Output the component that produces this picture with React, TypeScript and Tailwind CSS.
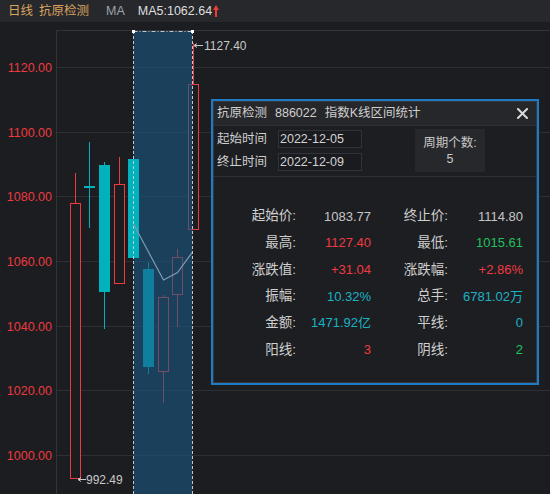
import React from "react";

const RED = "#ec3a3e";
const CYAN = "#00b2bb";
const BG = "#1c1d21";

type C = { cx: number; top: number; bot: number; hi: number; lo: number; kind: "up" | "down" | "doji" };

const before: C[] = [
  { cx: 75.5, top: 203, bot: 479, hi: 173, lo: 479, kind: "up" },
  { cx: 89.5, top: 186, bot: 188, hi: 142, lo: 228, kind: "doji" },
  { cx: 104.5, top: 165, bot: 292, hi: 162, lo: 329, kind: "down" },
  { cx: 119.5, top: 184, bot: 284, hi: 157, lo: 284, kind: "up" },
];
const inside: C[] = [
  { cx: 148.5, top: 269, bot: 367, hi: 262, lo: 374, kind: "down" },
  { cx: 163.5, top: 297, bot: 372, hi: 295, lo: 403, kind: "up" },
  { cx: 177.5, top: 257, bot: 295, hi: 249, lo: 327, kind: "up" },
  { cx: 193.5, top: 84, bot: 230, hi: 43, lo: 230, kind: "up" },
];
const c5: C = { cx: 133.5, top: 159, bot: 258, hi: 159, lo: 258, kind: "down" };

function Candle({ c }: { c: C }) {
  const x0 = c.cx - 5.5;
  if (c.kind === "up") {
    return (
      <g>
        <rect x={c.cx - 0.5} y={c.hi} width={1} height={c.lo - c.hi} fill={RED} />
        <rect x={x0} y={c.top} width={11} height={c.bot - c.top} fill={RED} />
        <rect x={x0 + 1} y={c.top + 1} width={9} height={c.bot - c.top - 2} fill={BG} />
      </g>
    );
  }
  if (c.kind === "doji") {
    return (
      <g fill={CYAN}>
        <rect x={c.cx - 0.5} y={c.hi} width={1} height={c.lo - c.hi} />
        <rect x={x0} y={c.top} width={11} height={2} />
      </g>
    );
  }
  return (
    <g fill={CYAN}>
      <rect x={c.cx - 0.5} y={c.hi} width={1} height={c.lo - c.hi} />
      <rect x={x0} y={c.top} width={11} height={c.bot - c.top} />
    </g>
  );
}

const grid = [
  { y: 67, label: "1120.00" },
  { y: 132, label: "1100.00" },
  { y: 196, label: "1080.00" },
  { y: 261, label: "1060.00" },
  { y: 326, label: "1040.00" },
  { y: 390, label: "1020.00" },
  { y: 455, label: "1000.00" },
];

const FONT = '"Liberation Sans", Arial, sans-serif';

function Chart() {
  return (
    <svg className="block" width={550} height={472} viewBox="0 22 550 472">
      <rect x={0} y={22} width={550} height={472} fill={BG} />
      <rect x={56} y={30} width={494} height={1} fill="#333438" />
      <rect x={56} y={30} width={1} height={464} fill="#333438" />
      {grid.map((g) => (
        <g key={g.y}>
          <rect x={57} y={g.y} width={493} height={1} fill="#2e2f33" />
          <text x={52} y={g.y + 5} textAnchor="end" fontSize={12.5} fill={RED} fontFamily={FONT}>
            {g.label}
          </text>
        </g>
      ))}
      {before.map((c) => (
        <Candle key={c.cx} c={c} />
      ))}
      {inside.map((c) => (
        <Candle key={c.cx} c={c} />
      ))}
      {/* selection overlay */}
      <rect x={133.5} y={31} width={59} height={463} fill="#1a5a88" opacity={0.58} />
      <Candle c={c5} />
      <polyline
        points="133.5,224 148.5,252 163.5,280 177.5,272.5 192.5,252"
        fill="none"
        stroke="#7e9cb2"
        strokeWidth={1.2}
      />
      <line x1={133.5} x2={133.5} y1={31} y2={494} stroke="#c4c8cc" strokeWidth={1} strokeDasharray="3 2" />
      <line x1={192.5} x2={192.5} y1={31} y2={494} stroke="#c4c8cc" strokeWidth={1} strokeDasharray="3 2" />
      <line x1={133.5} x2={192.5} y1={31.5} y2={31.5} stroke="#c4c8cc" strokeWidth={1} strokeDasharray="4 2 1 2" />
      <rect x={132} y={30} width={3} height={3} fill="#ffffff" />
      <rect x={191} y={30} width={3} height={3} fill="#ffffff" />
      {/* high label */}
      <line x1={194} x2={203} y1={45.5} y2={45.5} stroke="#c8c8c8" strokeWidth={1} />
      <path d="M194 45.5 L197 43.5 M194 45.5 L197 47.5" stroke="#c8c8c8" strokeWidth={1} fill="none" />
      <text x={204} y={50} fontSize={12} fill="#c8c8c8" fontFamily={FONT}>
        1127.40
      </text>
      {/* low label */}
      <line x1={78} x2={86} y1={479.5} y2={479.5} stroke="#c8c8c8" strokeWidth={1} />
      <path d="M78 479.5 L81 477.5 M78 479.5 L81 481.5" stroke="#c8c8c8" strokeWidth={1} fill="none" />
      <text x={86} y={484} fontSize={12} fill="#c8c8c8" fontFamily={FONT}>
        992.49
      </text>
    </svg>
  );
}

type Cell = { t: string; c: string };
const rows: [string, Cell, string, Cell][] = [
  ["起始价:", { t: "1083.77", c: "text-[#c6c6c6]" }, "终止价:", { t: "1114.80", c: "text-[#c6c6c6]" }],
  ["最高:", { t: "1127.40", c: "text-[#ee3b40]" }, "最低:", { t: "1015.61", c: "text-[#22c25c]" }],
  ["涨跌值:", { t: "+31.04", c: "text-[#ee3b40]" }, "涨跌幅:", { t: "+2.86%", c: "text-[#ee3b40]" }],
  ["振幅:", { t: "10.32%", c: "text-[#1bb3c4]" }, "总手:", { t: "6781.02万", c: "text-[#1bb3c4]" }],
  ["金额:", { t: "1471.92亿", c: "text-[#1bb3c4]" }, "平线:", { t: "0", c: "text-[#1bb3c4]" }],
  ["阳线:", { t: "3", c: "text-[#ee3b40]" }, "阴线:", { t: "2", c: "text-[#22c25c]" }],
];

function Dialog() {
  return (
    <div className="absolute left-[211px] top-[77px] w-[328px] h-[286px] border-2 border-[#1e7bc6] bg-[#1d1e22]">
      <div className="h-full border border-[#38343a] flex flex-col">
        <div className="h-[24px] bg-[#26272b] border-b border-[#303136] flex items-center pl-[3px] pr-[8px] text-[12.5px] text-[#cfcfcf]">
          <span>抗原检测</span>
          <span className="ml-[8px]">886022</span>
          <span className="ml-[8px]">指数K线区间统计</span>
          <svg className="ml-auto" width={11} height={11} viewBox="0 0 11 11">
            <path d="M1 1 L10 10 M10 1 L1 10" stroke="#d8d8d8" strokeWidth={2} strokeLinecap="square" />
          </svg>
        </div>
        <div className="h-[51px] border-b border-[#303136] flex items-start text-[12.5px] text-[#cfcfcf]">
          <div className="flex flex-col gap-[5px] pt-[4px] pl-[3px]">
            <div className="flex items-center h-[18px]">
              <span className="w-[61px]">起始时间</span>
              <div className="w-[84px] h-[18px] border border-[#323338] bg-[#1a1b1f] flex items-center pl-[1px] text-[#d2d2d2]">
                2022-12-05
              </div>
            </div>
            <div className="flex items-center h-[18px]">
              <span className="w-[61px]">终止时间</span>
              <div className="w-[84px] h-[18px] border border-[#323338] bg-[#1a1b1f] flex items-center pl-[1px] text-[#d2d2d2]">
                2022-12-09
              </div>
            </div>
          </div>
          <div className="ml-[53px] mt-[3px] w-[70px] h-[43px] bg-[#27282c] flex flex-col items-center justify-center leading-[16px] text-[#c8c8c8]">
            <span>周期个数:</span>
            <span>5</span>
          </div>
        </div>
        <div className="pt-[26px] grid grid-cols-[82px_75px_77px_75px]">
          {rows.map((r, i) => (
            <React.Fragment key={i}>
              <div className="h-[26.7px] flex items-center justify-end text-[13.5px] text-[#cfcfcf]">{r[0]}</div>
              <div className={`h-[26.7px] flex items-center justify-end text-[13px] ${r[1].c}`}>{r[1].t}</div>
              <div className="h-[26.7px] flex items-center justify-end text-[13.5px] text-[#cfcfcf]">{r[2]}</div>
              <div className={`h-[26.7px] flex items-center justify-end text-[13px] ${r[3].c}`}>{r[3].t}</div>
            </React.Fragment>
          ))}
        </div>
      </div>
    </div>
  );
}

export default function App() {
  return (
    <div
      className="w-[550px] h-[494px] overflow-hidden bg-[#1c1d21] flex flex-col"
      style={{ fontFamily: '"Liberation Sans", "Noto Sans CJK SC", sans-serif' }}
    >
      <div className="h-[22px] shrink-0 bg-[#27282c] flex items-center pl-[8px] text-[12.5px]">
        <span className="text-[#d8a35f]">日线</span>
        <span className="ml-[6px] text-[#d8a35f]">抗原检测</span>
        <span className="ml-[17px] text-[#9ea3aa]">MA</span>
        <span className="ml-[13px] text-[#dedede]">MA5:1062.64</span>
        <svg className="ml-[1px]" width={6} height={12} viewBox="0 0 6 12">
          <path d="M3 0 L6 5 L4 5 L4 12 L2 12 L2 5 L0 5 Z" fill="#f03b3b" />
        </svg>
      </div>
      <div className="relative flex-1">
        <Chart />
        <Dialog />
      </div>
    </div>
  );
}
